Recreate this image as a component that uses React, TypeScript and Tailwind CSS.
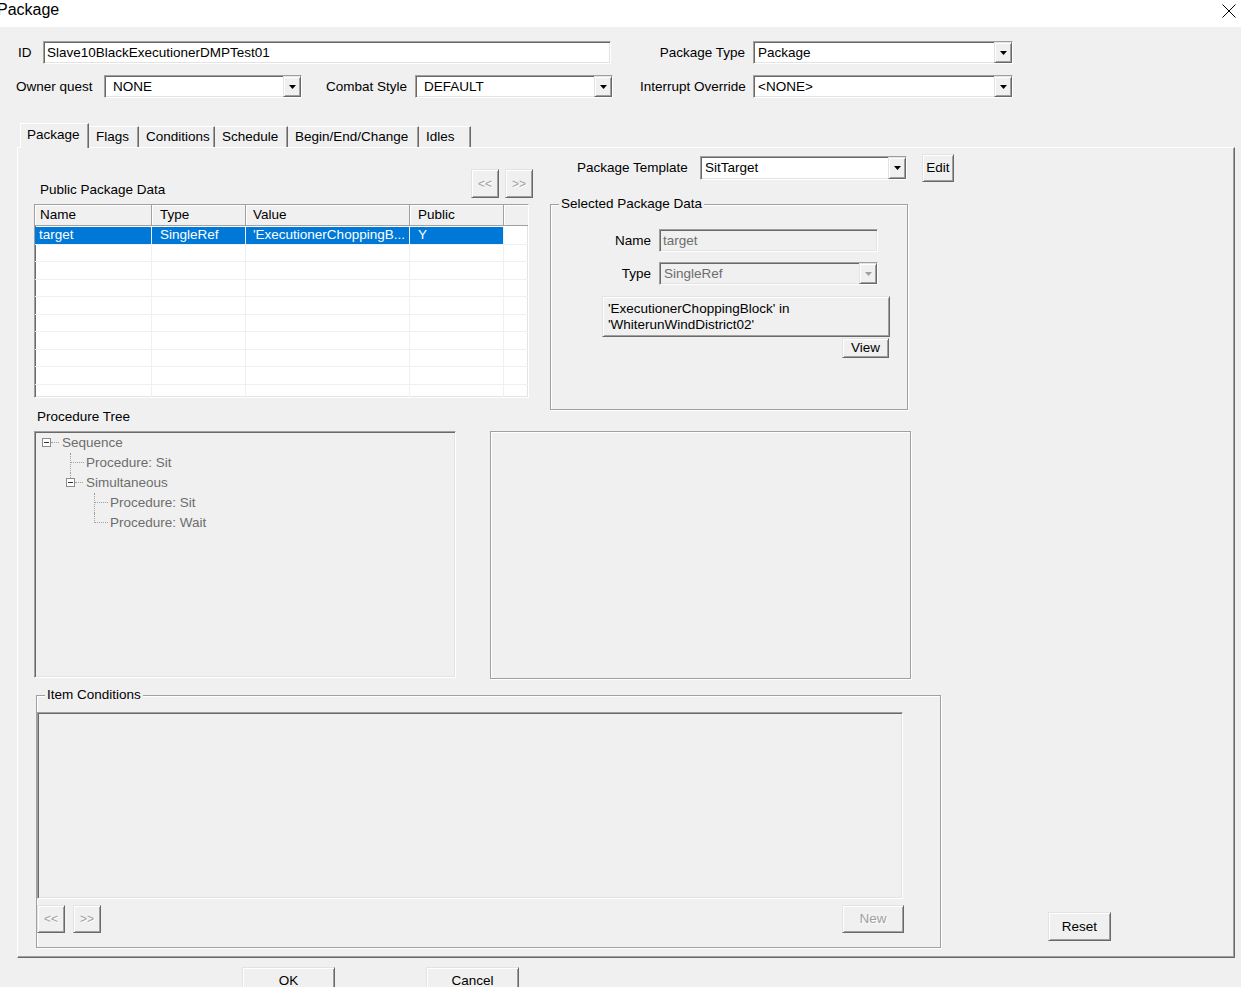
import type { ReactNode } from "react";

const sunken =
  "border border-t-[#a0a0a0] border-l-[#a0a0a0] border-b-white border-r-white shadow-[inset_1px_1px_0_#696969,inset_-1px_-1px_0_#e3e3e3]";
const raised =
  "border border-t-[#e3e3e3] border-l-[#e3e3e3] border-b-[#696969] border-r-[#696969] shadow-[inset_1px_1px_0_#fff,inset_-1px_-1px_0_#a0a0a0] bg-[#f0f0f0]";
const etched = "border border-[#a0a0a0] shadow-[inset_1px_1px_0_#fff,1px_1px_0_#fff]";

function Arrow({ disabled = false }: { disabled?: boolean }) {
  return (
    <svg width="7" height="4" viewBox="0 0 7 4" aria-hidden>
      <polygon points="0,0 7,0 3.5,4" fill={disabled ? "#a0a0a0" : "#000"} />
    </svg>
  );
}

function Combo({
  value,
  className = "",
  disabled = false,
}: {
  value: string;
  className?: string;
  disabled?: boolean;
}) {
  return (
    <div className={`flex ${sunken} ${disabled ? "bg-[#f0f0f0]" : "bg-white"} ${className}`}>
      <div
        className={`flex flex-1 items-center pl-[4px] ${disabled ? "text-[#6d6d6d]" : "text-black"}`}
      >
        {value}
      </div>
      <div className={`flex w-[18px] shrink-0 items-center justify-center ${raised}`}>
        <Arrow disabled={disabled} />
      </div>
    </div>
  );
}

function Btn({
  children,
  className = "",
  disabled = false,
}: {
  children: ReactNode;
  className?: string;
  disabled?: boolean;
}) {
  return (
    <div
      className={`flex items-center justify-center ${raised} ${
        disabled ? "text-[#a0a0a0] [text-shadow:1px_1px_0_#fff]" : "text-black"
      } ${className}`}
    >
      {children}
    </div>
  );
}

function GroupBox({
  title,
  className = "",
  children,
}: {
  title: string;
  className?: string;
  children: ReactNode;
}) {
  return (
    <fieldset className={`${etched} ${className}`}>
      <legend className="ml-[8px] bg-[#f0f0f0] px-[2px] leading-[16px]">{title}</legend>
      {children}
    </fieldset>
  );
}

const tabs: { label: string; w: string }[] = [
  { label: "Flags", w: "w-[50px]" },
  { label: "Conditions", w: "w-[76px]" },
  { label: "Schedule", w: "w-[73px]" },
  { label: "Begin/End/Change", w: "w-[131px]" },
  { label: "Idles", w: "w-[52px]" },
];

const columns = [
  { label: "Name", w: "w-[117px]", pad: "pl-[5px]" },
  { label: "Type", w: "w-[94px]", pad: "pl-[8px]" },
  { label: "Value", w: "w-[164px]", pad: "pl-[7px]" },
  { label: "Public", w: "w-[94px]", pad: "pl-[8px]" },
];

const selected = ["target", "SingleRef", "'ExecutionerChoppingB...", "Y"];

type Vert = "none" | "full" | "half" | "toBox";

function TreeRow({
  pad,
  label,
  expander = false,
  vert,
}: {
  pad: string;
  label: string;
  expander?: boolean;
  vert: Vert;
}) {
  return (
    <div className={`flex h-[20px] items-center ${pad}`}>
      <div className="relative h-full w-[16px] shrink-0">
        {vert === "full" && (
          <span className="absolute left-[7px] top-0 h-full border-l border-dotted border-[#a0a0a0]" />
        )}
        {vert === "half" && (
          <span className="absolute left-[7px] top-0 h-[10px] border-l border-dotted border-[#a0a0a0]" />
        )}
        {vert === "toBox" && (
          <span className="absolute left-[7px] top-0 h-[5px] border-l border-dotted border-[#a0a0a0]" />
        )}
        {expander ? (
          <>
            <span className="absolute left-[3px] top-[5px] flex h-[9px] w-[9px] items-center justify-center border border-[#8c8c8c] bg-white">
              <span className="h-px w-[5px] bg-[#333]" />
            </span>
            <span className="absolute left-[12px] top-[9px] w-[8px] border-t border-dotted border-[#a0a0a0]" />
          </>
        ) : (
          <span className="absolute left-[8px] top-[9px] w-[13px] border-t border-dotted border-[#a0a0a0]" />
        )}
      </div>
      <span className="ml-[7px] text-[#6d6d6d]">{label}</span>
    </div>
  );
}

export default function App() {
  return (
    <div className="h-[987px] w-[1241px] overflow-hidden bg-[#f0f0f0] font-['Liberation_Sans',Arial,sans-serif] text-[13.5px] leading-[16px] text-black">
      {/* title bar */}
      <div className="flex h-[27px] items-start justify-between bg-white pt-[1px]">
        <span className="-ml-[3px] text-[16px] leading-[18px]">Package</span>
        <svg width="14" height="14" viewBox="0 0 14 14" className="mr-[5px] mt-[3px]" aria-hidden>
          <path d="M0.5 0.5 L13.5 13.5 M13.5 0.5 L0.5 13.5" stroke="#000" strokeWidth="1" />
        </svg>
      </div>

      {/* row 1 */}
      <div className="mt-[14px] flex h-[23px] items-center pl-[18px]">
        <span className="w-[25px]">ID</span>
        <div className={`flex h-[23px] w-[568px] items-center bg-white pl-[3px] ${sunken}`}>
          Slave10BlackExecutionerDMPTest01
        </div>
        <span className="w-[142px] pr-[8px] text-right">Package Type</span>
        <Combo value="Package" className="h-[23px] w-[260px]" />
      </div>

      {/* row 2 */}
      <div className="mt-[11px] flex h-[23px] items-center pl-[16px]">
        <span className="w-[88px]">Owner quest</span>
        <Combo value="NONE" className="h-[23px] w-[198px] pl-[4px]" />
        <span className="w-[113px] pl-[24px]">Combat Style</span>
        <Combo value="DEFAULT" className="h-[23px] w-[198px] pl-[4px]" />
        <span className="w-[140px] pl-[27px]">Interrupt Override</span>
        <Combo value="<NONE>" className="h-[23px] w-[260px]" />
      </div>

      {/* tabs */}
      <div className="mt-[25px] flex h-[24px] items-end pl-[20px]">
        <div className="relative z-10 -mb-[1px] flex h-[25px] w-[69px] items-start border-l border-r border-t border-l-white border-r-[#696969] border-t-white bg-[#f0f0f0] pl-[6px] pt-[3px] shadow-[inset_-1px_0_0_#a0a0a0]">
          Package
        </div>
        {tabs.map((t) => (
          <div
            key={t.label}
            className={`flex h-[21px] items-center border-r border-t border-r-[#696969] border-t-white pl-[7px] shadow-[inset_-1px_0_0_#a0a0a0] ${t.w}`}
          >
            {t.label}
          </div>
        ))}
      </div>

      {/* tab panel */}
      <div className="ml-[17px] h-[811px] w-[1218px] border border-b-[#696969] border-l-white border-r-[#696969] border-t-white pl-[16px] pt-[6px] shadow-[inset_-1px_-1px_0_#a0a0a0]">
        {/* section A */}
        <div className="flex">
          <div className="w-[499px]">
            <div className="flex h-[50px] items-end justify-between">
              <span className="mb-[6px] ml-[6px]">Public Package Data</span>
              <div className="mb-[6px] flex gap-[6px]">
                <Btn disabled className="h-[29px] w-[28px] text-[12px]">
                  &lt;&lt;
                </Btn>
                <Btn disabled className="h-[29px] w-[28px] text-[12px]">
                  &gt;&gt;
                </Btn>
              </div>
            </div>
            <div className={`h-[194px] w-[495px] overflow-hidden bg-white ${sunken}`}>
              <div className="flex h-[21px]">
                {columns.map((c) => (
                  <div
                    key={c.label}
                    className={`flex items-center border-b border-r border-b-[#a0a0a0] border-r-[#a0a0a0] bg-[#f0f0f0] shadow-[inset_1px_1px_0_#fff] ${c.w} ${c.pad}`}
                  >
                    {c.label}
                  </div>
                ))}
                <div className="flex-1 border-b border-b-[#a0a0a0] bg-[#f0f0f0] shadow-[inset_1px_1px_0_#fff]" />
              </div>
              <div className="pt-[1px]">
                {Array.from({ length: 10 }).map((_, r) => (
                  <div key={r} className="flex h-[17.5px] border-b border-[#f0f0f0]">
                    {columns.map((c, i) => (
                      <div
                        key={c.label}
                        className={`flex items-center border-r border-[#f0f0f0] ${c.w} ${i === 0 ? "pl-[4px]" : c.pad} ${
                          r === 0 ? "bg-[#0078d7] text-white" : ""
                        }`}
                      >
                        {r === 0 ? selected[i] : ""}
                      </div>
                    ))}
                    <div className="flex-1" />
                  </div>
                ))}
              </div>
            </div>
          </div>

          <div className="ml-[17px]">
            <div className="flex h-[28px] items-center">
              <span className="w-[150px] pl-[27px]">Package Template</span>
              <Combo value="SitTarget" className="h-[24px] w-[207px]" />
              <Btn className="ml-[15px] h-[28px] w-[32px]">Edit</Btn>
            </div>
            <GroupBox title="Selected Package Data" className="mt-[14px] w-[358px]">
              <div className="h-[197px] pt-[17px]">
                <div className="flex h-[23px] items-center">
                  <span className="w-[100px] text-right">Name</span>
                  <div
                    className={`ml-[8px] flex h-[23px] w-[219px] items-center bg-[#f0f0f0] pl-[3px] text-[#6d6d6d] ${sunken}`}
                  >
                    target
                  </div>
                </div>
                <div className="mt-[10px] flex h-[23px] items-center">
                  <span className="w-[100px] text-right">Type</span>
                  <Combo value="SingleRef" disabled className="ml-[8px] h-[23px] w-[219px]" />
                </div>
                <Btn className="ml-[51px] mt-[11px] h-[41px] w-[288px] !justify-start pl-[5px] text-left">
                  <span>
                    'ExecutionerChoppingBlock' in
                    <br />
                    'WhiterunWindDistrict02'
                  </span>
                </Btn>
                <Btn className="ml-[291px] mt-[1px] h-[20px] w-[47px]">View</Btn>
              </div>
            </GroupBox>
          </div>
        </div>

        {/* section B */}
        <div className="flex">
          <div className="w-[422px]">
            <div className="h-[21px] pl-[3px] leading-[14px]">Procedure Tree</div>
            <div className={`h-[247px] w-[422px] bg-[#f0f0f0] pt-[1px] ${sunken}`}>
              <TreeRow pad="pl-[4px]" label="Sequence" expander vert="none" />
              <TreeRow pad="pl-[28px]" label="Procedure: Sit" vert="full" />
              <TreeRow pad="pl-[28px]" label="Simultaneous" expander vert="toBox" />
              <TreeRow pad="pl-[52px]" label="Procedure: Sit" vert="full" />
              <TreeRow pad="pl-[52px]" label="Procedure: Wait" vert="half" />
            </div>
          </div>
          <div className={`ml-[34px] mt-[21px] h-[248px] w-[421px] ${etched}`} />
        </div>

        {/* section C */}
        <div className="mt-[8px] flex items-end">
          <GroupBox title="Item Conditions" className="ml-[2px] w-[905px]">
            <div className="pb-[14px] pt-[9px]">
              <div className={`h-[187px] w-[866px] bg-[#f0f0f0] ${sunken}`} />
              <div className="mt-[6px] flex h-[28px] w-[867px]">
                <Btn disabled className="h-[28px] w-[28px] text-[12px]">
                  &lt;&lt;
                </Btn>
                <Btn disabled className="ml-[8px] h-[28px] w-[28px] text-[12px]">
                  &gt;&gt;
                </Btn>
                <Btn disabled className="ml-auto h-[28px] w-[62px]">
                  New
                </Btn>
              </div>
            </div>
          </GroupBox>
          <Btn className="mb-[7px] ml-[107px] h-[29px] w-[63px]">Reset</Btn>
        </div>
      </div>

      {/* footer */}
      <div className="ml-[242px] mt-[9px] flex">
        <Btn className="h-[30px] w-[93px] items-start pt-[5px]">OK</Btn>
        <Btn className="ml-[91px] h-[30px] w-[93px] items-start pt-[5px]">Cancel</Btn>
      </div>
    </div>
  );
}
